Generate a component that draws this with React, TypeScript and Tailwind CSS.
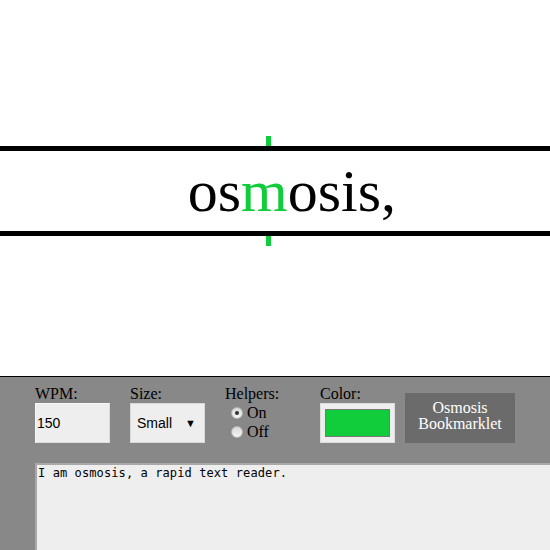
import React, { useState } from 'react';

const GREEN = '#11cc3b';

function Radio({ checked, label, onClick }: { checked: boolean; label: string; onClick: () => void }) {
  return (
    <label className="flex items-center cursor-pointer h-[19px]" onClick={onClick}>
      <span className="ml-[6px] mr-[4px] w-[12px] h-[12px] rounded-full border border-[#b5b5b5] bg-gradient-to-b from-[#d9d9d9] to-[#f4f4f4] flex items-center justify-center">
        {checked && <span className="w-[4px] h-[4px] rounded-full bg-[#333]" />}
      </span>
      <span>{label}</span>
    </label>
  );
}

function App() {
  const [wpm, setWpm] = useState('150');
  const [helpers, setHelpers] = useState(true);
  const [text, setText] = useState('I am osmosis, a rapid text reader.');

  return (
    <div className="h-screen overflow-hidden flex flex-col bg-white font-['Liberation_Serif',serif] text-black">
      {/* reader */}
      <div className="pt-[136px] h-[376px]">
        <div className="h-[10px] flex">
          <div className="ml-[266px] w-[5px] bg-[#11cc3b]" />
        </div>
        <div className="h-[90px] border-y-[5px] border-black flex items-center text-[60px] leading-[80px] whitespace-pre">
          <span className="w-[241px] text-right shrink-0">os</span>
          <span style={{ color: GREEN }}>m</span>
          <span>osis,</span>
        </div>
        <div className="h-[10px] flex">
          <div className="ml-[266px] w-[5px] bg-[#11cc3b]" />
        </div>
      </div>

      {/* controls */}
      <div className="flex-1 bg-[#888888] border-t border-black pt-[8px] pl-[35px] overflow-hidden">
        <div className="flex items-end text-[16px] leading-[18px]">
          <div className="w-[75px] mr-[20px]">
            <div className="h-[18px]">WPM:</div>
            <input
              value={wpm}
              onChange={e => setWpm(e.target.value)}
              className="w-[75px] h-[40px] bg-[#eeeeee] border border-t-[#f8f8f8] border-l-[#f8f8f8] border-r-[#dcdcdc] border-b-[#dcdcdc] px-[1px] font-['Liberation_Sans',sans-serif] text-[14px] outline-none"
            />
          </div>
          <div className="w-[75px] mr-[20px]">
            <div className="h-[18px]">Size:</div>
            <div className="w-[75px] h-[40px] bg-[#eeeeee] border border-[#d8d8d8] flex items-center justify-between pl-[6px] pr-[8px] font-['Liberation_Sans',sans-serif] text-[14px]">
              <span>Small</span>
              <span className="text-[11px]">▼</span>
            </div>
          </div>
          <div className="w-[75px] mr-[20px] h-[58px]">
            <div className="h-[18px]">Helpers:</div>
            <Radio checked={helpers} label="On" onClick={() => setHelpers(true)} />
            <Radio checked={!helpers} label="Off" onClick={() => setHelpers(false)} />
          </div>
          <div className="w-[75px] mr-[10px]">
            <div className="h-[18px]">Color:</div>
            <div className="w-[75px] h-[40px] bg-[#eeeeee] border border-[#dddddd] px-[4px] pt-[5px] pb-[5px]">
              <div className="w-full h-full border border-[#777777]" style={{ backgroundColor: GREEN }} />
            </div>
          </div>
          <button className="w-[110px] h-[50px] bg-[#6b6b6b] text-white text-[16px] leading-[16px] pb-[4px]">
            Osmosis
            <br />
            Bookmarklet
          </button>
        </div>
        <textarea
          value={text}
          onChange={e => setText(e.target.value)}
          className="mt-[20px] w-[540px] h-[160px] bg-[#eeeeee] border-2 border-t-[#a8a8a8] border-l-[#a8a8a8] border-r-[#dddddd] border-b-[#dddddd] px-[1px] py-[1px] font-['DejaVu_Sans_Mono',monospace] text-[12px] leading-[14px] tracking-[0.1px] resize-none outline-none block"
        />
      </div>
    </div>
  );
}

export default App;
